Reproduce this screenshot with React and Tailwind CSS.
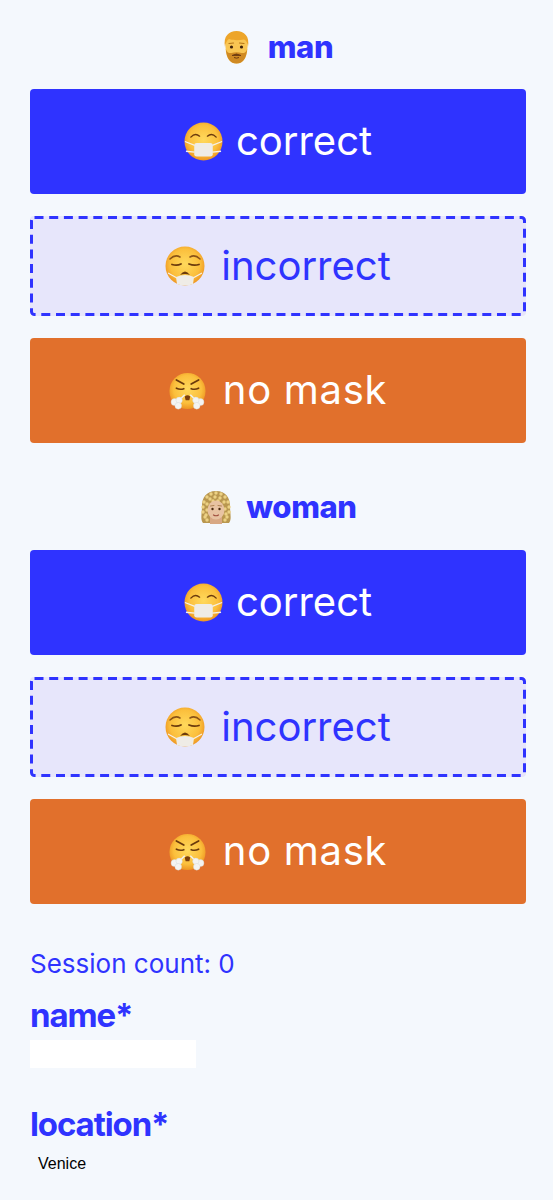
import React from "react";

const font = "font-['Inter','Liberation_Sans',sans-serif]";

// curls round the woman's head
const curls = [
    [6, 27], [4, 22], [4, 17], [5, 12], [8, 7], [12, 4], [17, 3], [22, 4], [26, 7], [29, 12], [30, 17], [30, 22], [28, 27],
    [8, 30], [26, 30], [8, 20], [8, 14], [11, 9], [16, 7], [21, 8], [25, 12], [26, 19], [7, 25], [27, 24], [14, 11], [19, 11],
];

function FaceBase({ id, children }) {
    return (
        <>
            <defs>
                <radialGradient id={id} cx="50%" cy="45%" r="55%">
                    <stop offset="0%" stopColor="#ffd95c" />
                    <stop offset="70%" stopColor="#fbbf3c" />
                    <stop offset="100%" stopColor="#ee9522" />
                </radialGradient>
            </defs>
            <circle cx="20" cy="20" r="19.5" fill={`url(#${id})`} />
            {children}
        </>
    );
}

function MaskEmoji({ id }) {
    return (
        <svg viewBox="0 0 40 40" className="w-[39px] h-[39px] shrink-0">
            <FaceBase id={id}>
                <path d="M7 15.5 Q11.5 10.5 16 14.5" stroke="#6b3a0c" strokeWidth="1.4" fill="none" strokeLinecap="round" />
                <path d="M24 14.5 Q28.5 10.5 33 15.5" stroke="#6b3a0c" strokeWidth="1.4" fill="none" strokeLinecap="round" />
                <path d="M1 20 L11 24 M2 30 L11 31 M39 20 L29 24 M38 30 L29 31" stroke="#f6f1e8" strokeWidth="1.3" />
                <rect x="10.5" y="21.5" width="19" height="14" rx="2.5" fill="#efece6" />
            </FaceBase>
        </svg>
    );
}

function SideMaskEmoji({ id }) {
    return (
        <svg viewBox="0 0 40 40" className="w-[40px] h-[40px] shrink-0">
            <FaceBase id={id}>
                <path d="M5 13 Q10 8 15 11" stroke="#8a5317" strokeWidth="1.5" fill="none" strokeLinecap="round" />
                <path d="M25 11 Q30 8 35 13" stroke="#8a5317" strokeWidth="1.5" fill="none" strokeLinecap="round" />
                <path d="M7 18.5 Q12 20 16 18" stroke="#6b3a0c" strokeWidth="1.8" fill="none" strokeLinecap="round" />
                <path d="M24 18 Q29 20 34 18.5" stroke="#6b3a0c" strokeWidth="1.8" fill="none" strokeLinecap="round" />
                <path d="M15 29 Q20 22 25 29 Q20 27 15 29 Z" fill="#6b3a0c" />
                <path d="M3 27 L12 32 M37 27 L28 32" stroke="#f6f1e8" strokeWidth="1.2" />
                <path d="M11 31 Q20 27 29 31 L28 38 Q20 41 12 38 Z" fill="#efece6" />
            </FaceBase>
        </svg>
    );
}

function SteamEmoji({ id }) {
    return (
        <svg viewBox="0 0 40 40" className="w-[37px] h-[40px] shrink-0">
            <FaceBase id={id}>
                <path d="M8 8 L16 12.5 M32 8 L24 12.5" stroke="#6b3a0c" strokeWidth="1.9" strokeLinecap="round" />
                <path d="M8 17 Q12 19 16 17.5 M24 17.5 Q28 19 32 17" stroke="#6b3a0c" strokeWidth="1.8" fill="none" strokeLinecap="round" />
                <path d="M17 26 Q20 23 23 26 L22 30 L18 30 Z" fill="#7c3f0d" />
            </FaceBase>
            <path d="M17 24 L11 30 M23 24 L29 30" stroke="#f2f2f0" strokeWidth="1.6" />
            <g fill="#f4f4f2" stroke="#cfd2d3" strokeWidth="0.4">
                <circle cx="6" cy="32" r="3.8" />
                <circle cx="11" cy="30" r="3.4" />
                <circle cx="10" cy="36" r="3.6" />
                <circle cx="34" cy="32" r="3.8" />
                <circle cx="29" cy="30" r="3.4" />
                <circle cx="30" cy="36" r="3.6" />
            </g>
        </svg>
    );
}

function ManEmoji() {
    return (
        <svg viewBox="0 0 27 34" className="w-[27px] h-[34px] shrink-0">
            <path d="M2.5 13 C2 26 6 33.5 13.5 33.5 C21 33.5 25 26 24.5 13 C24 5 20 2 13.5 2 C7 2 3 5 2.5 13 Z" fill="#f9c653" />
            <path d="M2 17 C0 6 6 1 13.5 1 C21 1 27 6 25 17 C24.5 12.5 23 10 21 9.5 C16 10.5 10 10.5 6 9 C4 10 2.5 13 2 17 Z" fill="#eda52a" />
            <path d="M2.8 19 C3.5 29 7.5 33.5 13.5 33.5 C19.5 33.5 23.5 29 24.2 19 C23 22.5 21 23.5 18.5 23 C15.5 22 11.5 22 8.5 23 C6 23.5 4 22.5 2.8 19 Z" fill="#d08a23" />
            <path d="M9 25.5 Q13.5 22.5 18 25.5 Q13.5 25.5 9 25.5 Z" fill="#6e3b10" stroke="#6e3b10" strokeWidth="0.9" />
            <path d="M11 27.5 Q13.5 28.8 16 27.5" stroke="#6e3b10" strokeWidth="1" fill="none" />
            <circle cx="8.5" cy="17" r="1.6" fill="#3e230e" />
            <circle cx="18.5" cy="17" r="1.6" fill="#3e230e" />
            <path d="M6 13.5 L10.5 13 M16.5 13 L21 13.5" stroke="#b5761a" strokeWidth="1.2" strokeLinecap="round" />
        </svg>
    );
}

function WomanEmoji() {
    return (
        <svg viewBox="0 0 34 34" className="w-[34px] h-[34px] shrink-0">
            <path d="M17 1 C7 1 3 8 3 16 C3 24 1 29 4 33 L30 33 C33 29 31 24 31 16 C31 8 27 1 17 1 Z" fill="#b9974f" />
            {curls.map(([x, y], i) => (
                <circle key={i} cx={x} cy={y} r="1.7" fill="#ecd184" />
            ))}
            <path d="M11 27 L11 34 L23 34 L23 27 Z" fill="#d8a884" />
            <ellipse cx="17" cy="20" rx="8.5" ry="9.5" fill="#e8c3a2" />
            <circle cx="13.5" cy="19" r="1.2" fill="#4b2a10" />
            <circle cx="20.5" cy="19" r="1.2" fill="#4b2a10" />
            <path d="M11.5 16 L15 15.5 M19 15.5 L22.5 16" stroke="#a97c4a" strokeWidth="0.9" strokeLinecap="round" />
            <path d="M14.5 25 Q17 26.5 19.5 25" stroke="#a0503f" strokeWidth="1.2" fill="none" strokeLinecap="round" />
        </svg>
    );
}

function Gender({ icon, label, gap, top }) {
    return (
        <div className={`flex items-center justify-center h-[34px] ${gap} ${top}`}>
            {icon}
            <span className="pb-[2px] text-[31px] font-extrabold leading-none text-[#2f33ff] tracking-[-0.4px]">{label}</span>
        </div>
    );
}

function Section({ prefix }) {
    return (
        <div className="flex flex-col">
            <button className="h-[105px] rounded-[4px] bg-[#2f33ff] text-white flex items-center justify-center gap-[13px] text-[40px] leading-none">
                <MaskEmoji id={prefix + "a"} />
                <span className="pb-[2px]">correct</span>
            </button>
            <button className="relative h-[100px] mt-[22px] rounded-[4px] bg-[#e7e6fb] text-[#2f33ff] flex items-center justify-center gap-[16px] text-[40px] leading-none">
                <SideMaskEmoji id={prefix + "b"} />
                <span>incorrect</span>
                <svg className="absolute inset-0 w-full h-full" fill="none">
                    <rect x="1.5" y="1.5" width="493" height="97" rx="3" stroke="#2f33ff" strokeWidth="3" strokeDasharray="9 5.7" />
                </svg>
            </button>
            <button className="h-[105px] mt-[22px] rounded-[4px] bg-[#e1702c] text-white flex items-center justify-center gap-[17px] text-[40px] leading-none">
                <SteamEmoji id={prefix + "c"} />
                <span className="pb-[2px] tracking-[0.7px]">no mask</span>
            </button>
        </div>
    );
}

export default function App() {
    return (
        <div className={`${font} w-[553px] h-[1200px] overflow-hidden bg-[#f4f8fd] pl-[30px] pr-[27px] pt-[30px]`}>
            <Gender icon={<ManEmoji />} label="man" gap="gap-[18px]" />
            <div className="mt-[25px]">
                <Section prefix="m" />
            </div>
            <Gender icon={<WomanEmoji />} label="woman" gap="gap-[13px]" top="mt-[47px]" />
            <div className="mt-[26px]">
                <Section prefix="w" />
            </div>
            <p className="mt-[43px] text-[26px] leading-[34px] text-[#2f33ff]">Session count: 0</p>
            <label className="block mt-[15px] text-[33px] font-bold leading-[38px] tracking-[-1.1px] text-[#2f33ff]">name*</label>
            <input className="block mt-[6px] w-[166px] h-[28px] bg-white outline-none" />
            <label className="block mt-[37px] text-[33px] font-bold leading-[38px] tracking-[-1.1px] text-[#2f33ff]">location*</label>
            <div className="mt-[11px] pl-[8px] text-[16px] leading-[20px] text-black font-['Liberation_Sans',sans-serif]">Venice</div>
        </div>
    );
}
